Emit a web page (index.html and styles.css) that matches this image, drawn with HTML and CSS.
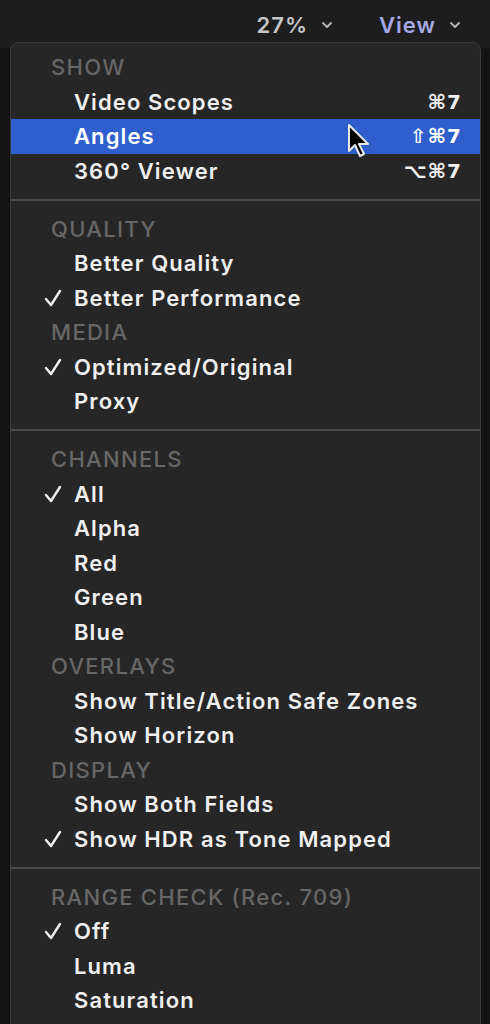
FILE: index.html
```html
<!DOCTYPE html>
<html>
<head>
<meta charset="utf-8">
<link rel="stylesheet" href="styles.css">
</head>
<body>
<div class="topbar">
  <span class="zoom">27%</span>
  <svg class="chev" width="12" height="8" viewBox="0 0 12 8"><path d="M2 2 L6 6 L10 2" fill="none" stroke="#b0b0b0" stroke-width="2" stroke-linecap="round" stroke-linejoin="round"/></svg>
  <span class="view">View</span>
  <svg class="chev last" width="12" height="8" viewBox="0 0 12 8"><path d="M2 2 L6 6 L10 2" fill="none" stroke="#b0b0b0" stroke-width="2" stroke-linecap="round" stroke-linejoin="round"/></svg>
</div>
<div class="stage">
  <div class="menu">
    <div class="hdr">SHOW</div>
    <div class="item"><span class="chk"></span><span class="lbl">Video Scopes</span><span class="key">⌘7</span></div>
    <div class="item sel"><span class="chk"></span><span class="lbl">Angles</span><span class="key">⇧⌘7</span>
      <svg class="cursor" width="28" height="36" viewBox="0 0 28 36"><path d="M3 2 L3 28 L9 22 L14 33 L18 31 L13 21 L22 21 Z" fill="#000" stroke="#e8e8e8" stroke-width="2" stroke-linejoin="round"/></svg>
    </div>
    <div class="item"><span class="chk"></span><span class="lbl">360° Viewer</span><span class="key">⌥⌘7</span></div>
    <div class="sep"></div>
    <div class="hdr">QUALITY</div>
    <div class="item"><span class="chk"></span><span class="lbl">Better Quality</span></div>
    <div class="item"><span class="chk"><svg width="18" height="18" viewBox="0 0 18 18"><path d="M2 10 L7 16 L16 2" fill="none" stroke="#f0f0f0" stroke-width="2.4" stroke-linecap="round" stroke-linejoin="round"/></svg></span><span class="lbl">Better Performance</span></div>
    <div class="hdr">MEDIA</div>
    <div class="item"><span class="chk"><svg width="18" height="18" viewBox="0 0 18 18"><path d="M2 10 L7 16 L16 2" fill="none" stroke="#f0f0f0" stroke-width="2.4" stroke-linecap="round" stroke-linejoin="round"/></svg></span><span class="lbl">Optimized/Original</span></div>
    <div class="item"><span class="chk"></span><span class="lbl">Proxy</span></div>
    <div class="sep"></div>
    <div class="hdr">CHANNELS</div>
    <div class="item"><span class="chk"><svg width="18" height="18" viewBox="0 0 18 18"><path d="M2 10 L7 16 L16 2" fill="none" stroke="#f0f0f0" stroke-width="2.4" stroke-linecap="round" stroke-linejoin="round"/></svg></span><span class="lbl">All</span></div>
    <div class="item"><span class="chk"></span><span class="lbl">Alpha</span></div>
    <div class="item"><span class="chk"></span><span class="lbl">Red</span></div>
    <div class="item"><span class="chk"></span><span class="lbl">Green</span></div>
    <div class="item"><span class="chk"></span><span class="lbl">Blue</span></div>
    <div class="hdr">OVERLAYS</div>
    <div class="item"><span class="chk"></span><span class="lbl">Show Title/Action Safe Zones</span></div>
    <div class="item"><span class="chk"></span><span class="lbl">Show Horizon</span></div>
    <div class="hdr">DISPLAY</div>
    <div class="item"><span class="chk"></span><span class="lbl">Show Both Fields</span></div>
    <div class="item"><span class="chk"><svg width="18" height="18" viewBox="0 0 18 18"><path d="M2 10 L7 16 L16 2" fill="none" stroke="#f0f0f0" stroke-width="2.4" stroke-linecap="round" stroke-linejoin="round"/></svg></span><span class="lbl">Show HDR as Tone Mapped</span></div>
    <div class="sep"></div>
    <div class="hdr">RANGE CHECK (Rec. 709)</div>
    <div class="item"><span class="chk"><svg width="18" height="18" viewBox="0 0 18 18"><path d="M2 10 L7 16 L16 2" fill="none" stroke="#f0f0f0" stroke-width="2.4" stroke-linecap="round" stroke-linejoin="round"/></svg></span><span class="lbl">Off</span></div>
    <div class="item"><span class="chk"></span><span class="lbl">Luma</span></div>
    <div class="item"><span class="chk"></span><span class="lbl">Saturation</span></div>
    <div class="item"><span class="chk"></span><span class="lbl">All</span></div>
  </div>
</div>
</body>
</html>
```
FILE: styles.css
```css
html, body {
  margin: 0;
  padding: 0;
  background: #131313;
  overflow: hidden;
  height: 1024px;
}
body {
  font-family: Inter, "Noto Sans", sans-serif;
  -webkit-font-smoothing: antialiased;
}
.topbar {
  height: 48px;
  background: #1d1d1d;
  display: flex;
  align-items: flex-start;
  justify-content: flex-end;
  padding-top: 11px;
  box-sizing: border-box;
  padding-right: 29px;
  font-size: 22px;
  font-weight: 600;
  letter-spacing: 1px;
}
.zoom {
  color: #c6c6c6;
  line-height: 28px;
}
.view {
  color: #a7a8e4;
  line-height: 28px;
  margin-left: 46px;
}
.chev {
  margin-left: 13px;
  margin-top: 10px;
}
.stage {
  margin-top: -6px;
  padding: 0 9px 0 10px;
}
.menu {
  background: #262626;
  border: 1px solid #3c3c3c;
  border-bottom: none;
  border-radius: 9px 9px 0 0;
  padding-top: 7px;
  height: 1000px;
  box-sizing: border-box;
  overflow: hidden;
}
.hdr {
  height: 34.5px;
  line-height: 34.5px;
  padding-left: 40px;
  color: #676767;
  font-size: 22px;
  font-weight: 500;
  letter-spacing: 1.3px;
}
.item {
  height: 34.5px;
  display: flex;
  align-items: center;
  position: relative;
  color: #efefef;
  font-size: 22px;
  font-weight: 600;
  letter-spacing: 1.1px;
  padding-right: 18px;
}
.item.sel {
  background: #2f5fcc;
  color: #fff;
}
.chk {
  width: 63px;
  height: 18px;
  box-sizing: border-box;
  padding-left: 33px;
  flex: none;
  display: flex;
}
.lbl {
  flex: 1;
  white-space: nowrap;
}
.key {
  font-family: "DejaVu Sans", sans-serif;
  font-weight: 700;
  font-size: 20px;
  letter-spacing: 1px;
}
.cursor {
  position: absolute;
  left: 335px;
  top: 4px;
}
.sep {
  height: 23.5px;
  display: flex;
  align-items: center;
}
.sep::before {
  content: "";
  display: block;
  width: 100%;
  height: 2px;
  background: #4a4a4a;
}
```
